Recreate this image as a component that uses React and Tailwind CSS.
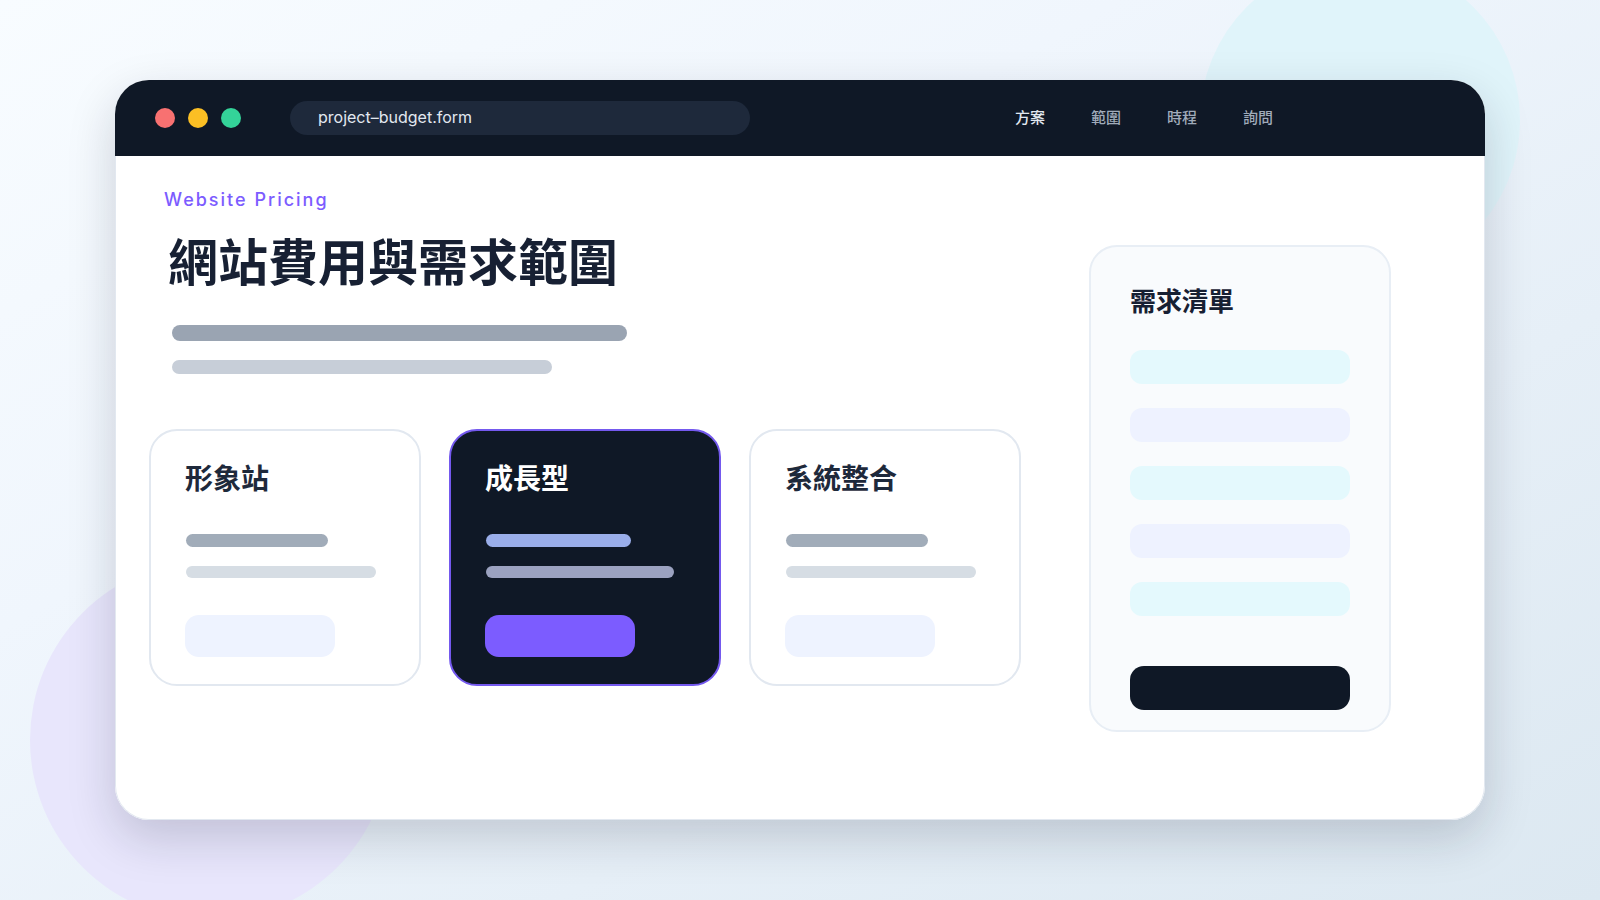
import React from 'react';

const navItems = [
  { label: '方案', active: true },
  { label: '範圍' },
  { label: '時程' },
  { label: '詢問' },
];

const plans = [
  { name: '形象站' },
  { name: '成長型', featured: true },
  { name: '系統整合' },
];

const requirements = ['cyan', 'indigo', 'cyan', 'indigo', 'cyan'];

const TopBar = () => (
  <header className="flex items-center bg-[#0f1826] h-[76px] pl-10 pr-[212px]">
    <div className="flex gap-[13px]">
      <span className="size-5 rounded-full bg-[#f87171]" />
      <span className="size-5 rounded-full bg-[#fbbf24]" />
      <span className="size-5 rounded-full bg-[#34d399]" />
    </div>
    <input
      type="text"
      aria-label="Address"
      defaultValue="project–budget.form"
      className="ml-[49px] w-[460px] min-w-0 h-[34px] rounded-full bg-[#1e293b] px-7 pb-0.5 text-base text-slate-200 outline-none"
    />
    <nav className="ml-auto flex gap-[46px] text-[15px] font-medium">
      {navItems.map((item) => (
        <a key={item.label} href="#" className={item.active ? 'text-slate-200' : 'text-[#a0abba]'}>
          {item.label}
        </a>
      ))}
    </nav>
  </header>
);

const PlanCard = ({ plan }) => (
  <article
    className={`flex-1 rounded-[28px] border-2 px-[34px] pt-7 pb-[27px] ${
      plan.featured ? 'bg-[#0f1826] border-[#7459ee]' : 'bg-white border-[#e2e8f0]'
    }`}
  >
    <h2
      className={`text-[28px] leading-10 font-bold ${
        plan.featured ? 'text-white' : 'text-[#1e293b]'
      }`}
    >
      {plan.name}
    </h2>
    <div className={`ml-px mt-[35px] h-[13px] rounded-full ${plan.featured ? 'w-[145px] bg-[#9aaeea]' : 'w-[142px] bg-[#a1acb9]'}`} />
    <div className={`ml-px mt-[19px] h-3 rounded-full ${plan.featured ? 'w-[188px] bg-[#9ba2c0]' : 'w-[190px] bg-[#d6dde4]'}`} />
    <button
      type="button"
      aria-label={plan.name}
      className={`mt-[37px] block h-[42px] w-[150px] rounded-[14px] ${plan.featured ? 'bg-[#7c5cff]' : 'bg-[#eef3ff]'}`}
    />
  </article>
);

const RequirementPanel = () => (
  <aside className="w-[302px] shrink-0 rounded-[28px] border-2 border-[#e8eef5] bg-[#f9fbfd] px-[39px] pt-[35px] pb-5">
    <h2 className="text-[26px] leading-10 font-bold text-[#172033]">需求清單</h2>
    <ul className="mt-7 flex flex-col gap-6">
      {requirements.map((tone, i) => (
        <li
          key={i}
          className={`h-[34px] rounded-xl ${tone === 'cyan' ? 'bg-[#e4f9fd]' : 'bg-[#eef2ff]'}`}
        />
      ))}
    </ul>
    <button
      type="button"
      aria-label="需求清單"
      className="mt-[50px] block h-11 w-full rounded-[14px] bg-[#0f1826]"
    />
  </aside>
);

export default function App() {
  return (
    <div className="relative flex min-h-screen flex-col overflow-hidden bg-linear-to-br from-[#f8fcff] via-[#f0f6fd] via-35% to-[#dce8f1] px-[115px] py-20 font-['Inter','Noto_Sans_CJK_TC',sans-serif]">
      {/* Background circles */}
      <div className="absolute -top-10 right-20 size-80 rounded-full bg-[#e0f4fa]" />
      <div className="absolute -bottom-5 left-[30px] size-[360px] rounded-full bg-[#e8e6fc]" />

      {/* Browser window */}
      <div className="relative flex flex-1 flex-col overflow-hidden rounded-[34px] bg-white shadow-[0_18px_48px_rgba(15,23,42,0.18)]">
        <TopBar />
        <main className="flex flex-1 items-start justify-between border border-t-0 border-[#e2e8f0] rounded-b-[34px] pl-[33px] pr-[93px]">
          <div className="w-[872px] pt-[30px]">
            <p className="ml-[15px] text-lg leading-7 font-medium tracking-[2px] text-[#7c5cff]">
              Website Pricing
            </p>
            <h1 className="ml-[19px] mt-[13px] text-[50px] leading-[72px] font-bold text-[#172033]">
              網站費用與需求範圍
            </h1>
            <div className="ml-[23px] mt-[26px] h-4 w-[455px] rounded-full bg-[#9aa4b2]" />
            <div className="ml-[23px] mt-[19px] h-[14px] w-[380px] rounded-full bg-[#c7ced8]" />
            <section className="mt-[55px] flex gap-7">
              {plans.map((plan) => (
                <PlanCard key={plan.name} plan={plan} />
              ))}
            </section>
          </div>
          <div className="pt-[89px]">
            <RequirementPanel />
          </div>
        </main>
      </div>
    </div>
  );
}
